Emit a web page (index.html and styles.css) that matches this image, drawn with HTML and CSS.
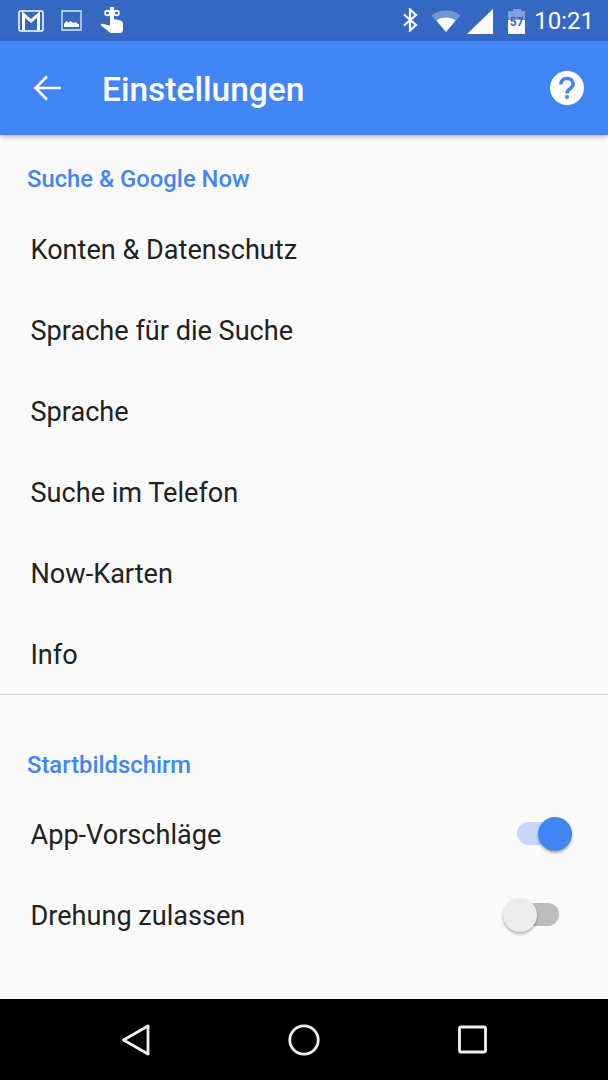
FILE: index.html
```html
<!DOCTYPE html>
<html lang="de">
<head>
<meta charset="utf-8">
<title>Einstellungen</title>
<link rel="stylesheet" href="styles.css">
</head>
<body>
<div class="screen">
  <header class="statusbar">
    <div class="status-left">
      <svg class="ic-gmail" viewBox="0 0 26 22"><rect x="1" y="1" width="24" height="20" rx="1.500" fill="none" stroke="#fff" stroke-width="1.500"/><path fill="none" stroke="#fff" stroke-width="3" d="M5.500 20V4.500l7.500 6.500 7.500-6.500V20"/></svg>
      <svg class="ic-image" viewBox="0 0 21 21"><path fill="none" stroke="#fff" stroke-width="1.300" opacity=".85" d="M1 1h19v19H1z"/><path fill="#fff" d="M3 17v-3l2.500-3 2 1.500 2-1.500 3 2 2-1 3.500 2.500V17z"/></svg>
      <svg class="ic-touch" viewBox="0 0 24 28"><g fill="none" stroke="#fff" stroke-width="1.800"><circle cx="7.500" cy="7" r="2.400"/><circle cx="16.500" cy="7" r="2.400"/></g><path fill="#fff" d="M10 1h4v12l6.500 1.500c1.500.4 2.500 1.500 2.500 3V24c0 1.500-1 3-3 3H10.500L1 19.500c-.8-.8 0-2 1.200-1.700L10 19.500z"/></svg>
    </div>
    <div class="status-right">
      <svg class="ic-bt" viewBox="0 0 16 24"><path fill="none" stroke="#fff" stroke-width="2.200" d="M2 6.500l12 10.500-6 5.500V1.500l6 5.500L2 17.500"/></svg>
      <svg class="ic-wifi" viewBox="0 0 30 22"><path fill="#fff" opacity=".3" d="M15 22L.5 5.500C4 2.500 9 .5 15 .5s11 2 14.500 5z"/><path fill="#fff" d="M15 22L5.500 10.500C8 8.500 11 7.500 15 7.500s7 1 9.500 3z"/></svg>
      <svg class="ic-signal" viewBox="0 0 26 25"><path fill="#fff" d="M0 25L26 0v25z"/></svg>
      <div class="battery">
        <div class="battery-cap"></div>
        <div class="battery-body"><span class="battery-level">57</span></div>
      </div>
      <span class="clock">10:21</span>
    </div>
  </header>
  <div class="appbar">
    <svg class="ic-back" viewBox="0 0 28 26"><path fill="none" stroke="#fff" stroke-width="2.600" d="M28 13H2.500M14 1.500L2.500 13 14 24.500"/></svg>
    <h1 class="title">Einstellungen</h1>
    <svg class="ic-help" viewBox="0 0 34 34"><circle cx="17" cy="17" r="17" fill="#fff"/><path fill="none" stroke="#4285f4" stroke-width="3.600" d="M10.800 13.500c0-3.600 2.700-6 6.200-6s6.200 2.400 6.200 5.600c0 4.400-6.200 4.700-6.200 9.400"/><rect x="15.200" y="24.200" width="3.600" height="3.600" fill="#4285f4"/></svg>
  </div>
  <main class="content">
    <h2 class="section-head">Suche &amp; Google Now</h2>
    <div class="row">Konten &amp; Datenschutz</div>
    <div class="row">Sprache für die Suche</div>
    <div class="row">Sprache</div>
    <div class="row">Suche im Telefon</div>
    <div class="row">Now-Karten</div>
    <div class="row">Info</div>
    <hr class="divider">
    <h2 class="section-head section-head-second">Startbildschirm</h2>
    <div class="row row-switch">App-Vorschläge
      <span class="switch switch-on"><span class="track"></span><span class="thumb"></span></span>
    </div>
    <div class="row row-switch">Drehung zulassen
      <span class="switch switch-off"><span class="track"></span><span class="thumb"></span></span>
    </div>
  </main>
  <nav class="navbar">
    <svg class="nav-ic" viewBox="0 0 34 34"><path fill="none" stroke="#f2f2f2" stroke-width="2.800" stroke-linejoin="round" d="M30 3L5.500 17 30 31z"/></svg>
    <svg class="nav-ic" viewBox="0 0 34 34"><circle cx="17" cy="17" r="14.200" fill="none" stroke="#f2f2f2" stroke-width="2.800"/></svg>
    <svg class="nav-ic" viewBox="0 0 34 34"><rect x="3.500" y="4" width="26" height="25" rx="1.500" fill="none" stroke="#f2f2f2" stroke-width="2.800"/></svg>
  </nav>
</div>
</body>
</html>
```
FILE: styles.css
```css
* { box-sizing: border-box; }
html, body { margin: 0; padding: 0; }
body { font-family: Roboto, "Liberation Sans", sans-serif; background: #fafafa; }
.screen { width: 608px; height: 1080px; display: flex; flex-direction: column; overflow: hidden; }

.statusbar { height: 41px; flex: none; background: #3568c2; display: flex; justify-content: space-between; align-items: center; padding: 0 14px 0 18px; }
.status-left { display: flex; align-items: center; }
.status-right { display: flex; align-items: center; }
.ic-gmail { width: 26px; height: 22px; margin-right: 17px; }
.ic-image { width: 21px; height: 21px; margin-right: 18px; }
.ic-touch { width: 24px; height: 28px; margin-top: -1px; }
.ic-bt { width: 16px; height: 24px; margin-right: 13px; margin-top: -1px; }
.ic-wifi { width: 30px; height: 24px; margin-right: 6px; }
.ic-signal { width: 26px; height: 25px; margin-right: 15px; margin-top: 1px; }
.battery { width: 17px; height: 25px; margin-right: 9px; display: flex; flex-direction: column; align-items: center; margin-top: 1px; }
.battery-cap { width: 8px; height: 2px; background: rgba(255,255,255,.35); }
.battery-body { width: 17px; height: 23px; display: flex; justify-content: center; background: linear-gradient(#7ba0dc 0, #7ba0dc 9px, #fff 9px); }
.battery-level { font-size: 12px; font-weight: 700; line-height: 16px; color: #3568c2; margin-top: 3px; }
.clock { font-size: 24px; line-height: 28px; color: #fff; }

.appbar { height: 94px; flex: none; background: #4285f4; display: flex; align-items: center; padding: 0 24px 0 33px; box-shadow: 0 2px 5px rgba(0,0,0,.28); position: relative; }
.ic-back { width: 28px; height: 26px; margin-right: 41px; }
.title { flex: 1; margin: 4px 0 0; font-size: 33.500px; font-weight: 500; color: #fff; line-height: 40px; }
.ic-help { width: 34px; height: 34px; }

.content { flex: 1; padding-top: 26px; }
.section-head { margin: 0; padding-left: 27px; font-size: 23.800px; font-weight: 500; line-height: 36px; color: #4285f4; height: 36px; }
.section-head-second { height: 37px; }
.row { height: 81px; display: flex; align-items: center; justify-content: space-between; padding: 2px 36px 0 30.500px; font-size: 27.100px; color: #212121; }
.section-head + .row { margin-top: 11px; }
.section-head-second + .row { margin-top: 9px; }
.divider { height: 1px; border: 0; margin: 0 0 52px; background: #d6d6d6; }
.switch { display: block; width: 69px; height: 34px; position: relative; margin-top: -1px; }
.track { position: absolute; left: 14px; right: 13px; top: 5px; height: 23px; border-radius: 12px; }
.thumb { position: absolute; top: 0; width: 34px; height: 34px; border-radius: 50%; box-shadow: 0 2px 3px rgba(0,0,0,.3); }
.switch-on .track { background: #c6d9f9; }
.switch-on .thumb { right: 0; background: #4285f4; }
.switch-off .track { background: #bdbdbd; }
.switch-off .thumb { left: 0; background: #ececec; }

.navbar { height: 81px; flex: none; background: #000; display: flex; align-items: center; justify-content: space-between; padding: 0 118px; }
.nav-ic { width: 34px; height: 34px; }
```
